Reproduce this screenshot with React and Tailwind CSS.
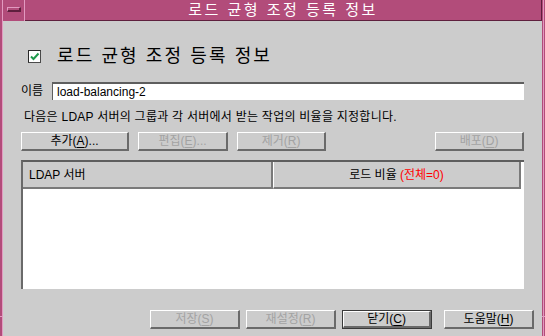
import React from "react";

const FONT = { fontFamily: '"Liberation Sans", "Noto Sans CJK KR", sans-serif' };

function Btn({ children, disabled, w, def }) {
  const inner = (
    <div
      className={`h-full flex items-center justify-center border-t border-l border-b-2 border-r-2 border-t-white border-l-white border-b-[#6a6a6a] border-r-[#6a6a6a] bg-[#cccccc] text-[12px] leading-none ${
        disabled ? "text-[#a3a3a3]" : "text-black"
      }`}
    >
      {children}
    </div>
  );
  if (def) {
    return (
      <div className={`${w} h-[19px] border border-[#3a3a3a]`}>{inner}</div>
    );
  }
  return <div className={`${w} h-[19px]`}>{inner}</div>;
}

function U({ c }) {
  return <span className="underline underline-offset-2">{c}</span>;
}

export default function App() {
  return (
    <div
      className="w-[545px] h-[336px] overflow-hidden flex flex-col bg-[#b24c7a]"
      style={FONT}
    >
      {/* Title bar */}
      <div className="h-[21px] flex shrink-0">
        <div className="w-[3px] flex">
          <div className="w-[2px] bg-[#b24c7a]" />
          <div className="w-[1px] bg-[#e29ac0]" />
        </div>
        <div className="w-[22px] flex items-start justify-center pt-[7px] border-r border-[#e29ac0]">
          <div className="w-[14px] h-[5px] border-t border-l border-b-2 border-r-2 border-t-[#e29ac0] border-l-[#e29ac0] border-b-[#5e1f3d] border-r-[#5e1f3d] bg-[#b24c7a]" />
        </div>
        <div className="flex-1 flex items-center justify-center border-b border-r border-[#5e1f3d] text-white text-[15px] tracking-[2.5px] leading-none pb-[1px]">
          로드 균형 조정 등록 정보
        </div>
        <div className="w-[3px] flex">
          <div className="w-[1px] bg-[#b24c7a]" />
          <div className="w-[1px] bg-[#e29ac0]" />
          <div className="w-[1px] bg-[#b24c7a]" />
        </div>
      </div>

      {/* Body */}
      <div className="flex-1 flex">
        <div className="w-[3px] flex flex-col">
          <div className="h-[295px] flex">
            <div className="w-[2px] bg-[#b24c7a]" />
            <div className="w-[1px] bg-[#e29ac0]" />
          </div>
          <div className="h-[1px] bg-[#e29ac0]" />
          <div className="flex-1 flex">
            <div className="w-[2px] bg-[#b24c7a]" />
            <div className="w-[1px] bg-[#e29ac0]" />
          </div>
        </div>

        <div className="flex-1 bg-[#cccccc] pl-[18px] pr-[8px] pt-[25px] flex flex-col">
          <div className="mr-[10px] flex flex-col">
            {/* Heading */}
            <div className="h-[20px] flex items-center pl-[7px]">
              <div className="w-[13px] h-[13px] bg-white border-t-[1.5px] border-l-[1.5px] border-b border-r border-t-[#2a2a2a] border-l-[#2a2a2a] border-b-[#4a4a4a] border-r-[#4a4a4a] flex items-center justify-center">
                <svg width="11" height="11" viewBox="0 0 11 11">
                  <path d="M2 5.5 L4.5 8 L9.5 2.5" fill="none" stroke="#1f9a4c" strokeWidth="2" />
                </svg>
              </div>
              <div className="ml-[16px] text-[18px] tracking-[2.1px] leading-none text-black">
                로드 균형 조정 등록 정보
              </div>
            </div>

            {/* Name */}
            <div className="mt-[16px] h-[18px] flex items-center">
              <div className="w-[31px] text-[12px] leading-none text-black">이름</div>
              <div className="flex-1 h-[18px] bg-white border-t-2 border-l border-t-[#5e5e5e] border-l-[#5e5e5e] flex items-center pl-[4px] text-[12px] leading-none text-black">
                load-balancing-2
              </div>
            </div>

            {/* Description */}
            <div className="mt-[9px] h-[16px] flex items-center pl-[3px] text-[12px] tracking-[0.25px] leading-none text-black">
              다음은 LDAP 서버의 그룹과 각 서버에서 받는 작업의 비율을 지정합니다.
            </div>

            {/* Buttons */}
            <div className="mt-[7px] flex">
              <Btn w="w-[108px]">
                추가(<U c="A" />)...
              </Btn>
              <div className="w-[9px]" />
              <Btn w="w-[90px]" disabled>
                편집(<U c="E" />)...
              </Btn>
              <div className="w-[9px]" />
              <Btn w="w-[89px]" disabled>
                제거(<U c="R" />)
              </Btn>
              <div className="flex-1" />
              <Btn w="w-[89px]" disabled>
                배포(<U c="D" />)
              </Btn>
            </div>

            {/* Table */}
            <div className="mt-[9px] h-[129px] bg-white border-t-2 border-l-2 border-t-[#5e5e5e] border-l-[#6a6a6a] flex flex-col">
              <div className="h-[27px] flex mr-[3px]">
                <div className="w-[250px] bg-[#cccccc] border-b-2 border-r-2 border-[#7a7a7a] flex items-center pl-[6px] text-[12px] leading-none text-black">
                  LDAP 서버
                </div>
                <div className="flex-1 bg-[#cccccc] border-l border-b-2 border-r-2 border-[#7a7a7a] border-l-white flex items-center justify-center text-[12px] leading-none text-black">
                  로드 비율&nbsp;<span className="text-[#ff0000]">(전체=0)</span>
                </div>
              </div>
              <div className="flex-1" />
            </div>
          </div>

          {/* Bottom buttons */}
          <div className="mt-[21px] flex justify-end">
            <Btn w="w-[90px]" disabled>
              저장(<U c="S" />)
            </Btn>
            <div className="w-[6px]" />
            <Btn w="w-[90px]" disabled>
              재설정(<U c="R" />)
            </Btn>
            <div className="w-[6px]" />
            <Btn w="w-[90px]" def>
              닫기(<U c="C" />)
            </Btn>
            <div className="w-[12px]" />
            <Btn w="w-[90px]">
              도움말(<U c="H" />)
            </Btn>
          </div>
        </div>

        <div className="w-[3px] flex flex-col">
          <div className="h-[295px] flex">
            <div className="w-[1px] bg-[#b24c7a]" />
            <div className="w-[1px] bg-[#e29ac0]" />
            <div className="w-[1px] bg-[#b24c7a]" />
          </div>
          <div className="h-[1px] bg-[#e29ac0]" />
          <div className="flex-1 flex">
            <div className="w-[1px] bg-[#b24c7a]" />
            <div className="w-[1px] bg-[#e29ac0]" />
            <div className="w-[1px] bg-[#b24c7a]" />
          </div>
        </div>
      </div>
    </div>
  );
}
